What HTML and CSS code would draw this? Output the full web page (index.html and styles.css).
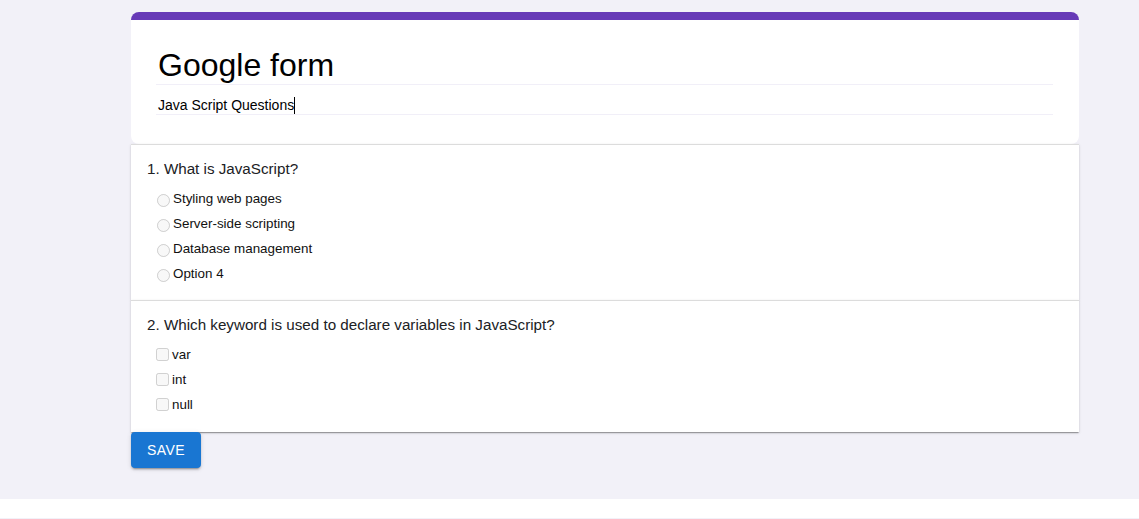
FILE: index.html
```html
<!DOCTYPE html>
<html lang="en">
<head>
<meta charset="utf-8">
<title>Google form</title>
<link rel="stylesheet" href="styles.css">
</head>
<body>
<div class="page">
  <div class="form">
    <div class="header-card">
      <div class="title-field">Google form</div>
      <div class="desc-field">Java Script Questions<span class="caret"></span></div>
    </div>
    <div class="question-card">
      <div class="question">1. What is JavaScript?</div>
      <div class="options">
        <label class="option"><input type="radio" name="q1" disabled><span>Styling web pages</span></label>
        <label class="option"><input type="radio" name="q1" disabled><span>Server-side scripting</span></label>
        <label class="option"><input type="radio" name="q1" disabled><span>Database management</span></label>
        <label class="option"><input type="radio" name="q1" disabled><span>Option 4</span></label>
      </div>
    </div>
    <div class="question-card last">
      <div class="question">2. Which keyword is used to declare variables in JavaScript?</div>
      <div class="options">
        <label class="option"><input type="checkbox" disabled><span>var</span></label>
        <label class="option"><input type="checkbox" disabled><span>int</span></label>
        <label class="option"><input type="checkbox" disabled><span>null</span></label>
      </div>
    </div>
    <div class="actions">
      <button class="save-btn" type="button">SAVE</button>
    </div>
  </div>
</div>
<div class="gap"></div>
<div class="footer"></div>
</body>
</html>
```

FILE: styles.css
```css
html, body {
  margin: 0;
  padding: 0;
  background: #ffffff;
  font-family: "Liberation Sans", Arial, sans-serif;
}

.page {
  background: #f2f1f8;
  padding: 12px 0 31px 131px;
}

.form {
  width: 948px;
  display: flex;
  flex-direction: column;
}

.header-card {
  background: #ffffff;
  border-top: 8px solid #673ab7;
  border-radius: 8px;
  padding: 27px 26px 29px 25px;
}

.title-field {
  font-size: 32px;
  line-height: 37px;
  color: #000000;
  padding-left: 2px;
  border-bottom: 1px solid #f1eff8;
}

.desc-field {
  margin-top: 12px;
  font-size: 14px;
  line-height: 16px;
  color: #000000;
  padding-left: 2px;
  border-bottom: 1px solid #f1eff8;
}

.caret {
  display: inline-block;
  width: 1px;
  height: 17px;
  background: #000000;
  vertical-align: -4px;
}

.question-card {
  background: #ffffff;
  border-top: 1px solid #dcdcdc;
  padding: 14px 16px 14px 16px;
  box-shadow: 0 2px 1px -1px rgba(0,0,0,0.2), 0 1px 1px 0 rgba(0,0,0,0.14), 0 1px 3px 0 rgba(0,0,0,0.12);
}

.question-card.last {
  padding-bottom: 15px;
}

.question {
  font-size: 15.2px;
  line-height: 20px;
  color: #202124;
}

.options {
  margin-top: 7px;
  margin-left: 5px;
  display: flex;
  flex-direction: column;
}

.option {
  height: 25px;
  display: flex;
  align-items: center;
  font-size: 13.4px;
  line-height: 16px;
  color: #111111;
}

.option input[type="radio"] {
  margin: 3px 3px 0 5px;
}

.option input[type="checkbox"] {
  margin: 3px 3px 3px 4px;
}

.actions {
  display: flex;
}

.save-btn {
  background: #1976d2;
  color: #ffffff;
  border: none;
  border-radius: 4px;
  height: 36px;
  padding: 0 16px;
  font-family: "Liberation Sans", Arial, sans-serif;
  font-size: 14px;
  letter-spacing: 0.4px;
  box-shadow: 0 3px 1px -2px rgba(0,0,0,0.2), 0 2px 2px 0 rgba(0,0,0,0.14), 0 1px 5px 0 rgba(0,0,0,0.12);
  cursor: pointer;
}

.gap {
  height: 19px;
  background: #ffffff;
}

.footer {
  height: 10px;
  background: #f2f1f8;
}
```
